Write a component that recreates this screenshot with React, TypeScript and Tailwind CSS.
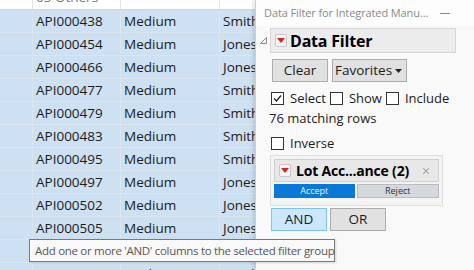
import { X } from "lucide-react";

const rows = [
  { id: "API000438", level: "Medium", who: "Smith" },
  { id: "API000454", level: "Medium", who: "Jones" },
  { id: "API000466", level: "Medium", who: "Jones" },
  { id: "API000477", level: "Medium", who: "Smith" },
  { id: "API000479", level: "Medium", who: "Smith" },
  { id: "API000483", level: "Medium", who: "Smith" },
  { id: "API000495", level: "Medium", who: "Smith" },
  { id: "API000497", level: "Medium", who: "Jones" },
  { id: "API000502", level: "Medium", who: "Jones" },
  { id: "API000505", level: "Medium", who: "Jones" },
  { id: "API000511", level: "Medium", who: "Jones" },
  { id: "API000519", level: "Medium", who: "Smith" },
];

function RedButton() {
  return (
    <span className="flex h-[13px] w-[12px] shrink-0 items-center justify-center rounded-[2px] border border-[#c8c8c8] bg-[#f4f4f4]">
      <svg width="8" height="5" viewBox="0 0 8 5">
        <path d="M0 0 H8 L4 5 Z" fill="#d9232a" />
      </svg>
    </span>
  );
}

function Check({ checked, label }: { checked?: boolean; label: string }) {
  return (
    <span className="flex items-center gap-[6px] whitespace-nowrap">
      <span className="flex h-[13px] w-[13px] items-center justify-center border border-[#333] bg-white">
        {checked && (
          <svg width="11" height="11" viewBox="0 0 11 11">
            <path d="M2 5.5 L4.5 8 L9 2.5" stroke="#222" strokeWidth="1.3" fill="none" />
          </svg>
        )}
      </span>
      <span>{label}</span>
    </span>
  );
}

export default function App() {
  return (
    <div
      className="relative flex h-[270px] w-[474px] overflow-hidden bg-white text-[#1b1b1b]"
      style={{ fontFamily: '"Open Sans", "Noto Sans", sans-serif' }}
    >
      {/* Data table */}
      <div className="flex-1 overflow-hidden whitespace-nowrap">
        <div className="-mt-[13px] grid h-[23px] grid-cols-[33px_88px_99px_1fr] border-b border-[#d4d4d4] text-[13.5px] text-[#777]">
          <div className="border-r border-[#e3e3e3]" />
          <div className="border-r border-[#e3e3e3] pl-[3px] leading-[21px]">65 Others</div>
          <div className="border-r border-[#e3e3e3]" />
          <div />
        </div>
        {rows.map((r) => (
          <div
            key={r.id}
            className="grid h-[23px] grid-cols-[33px_88px_99px_1fr] border-b border-[#dbe6f0] bg-[#cde1f2] text-[13.5px] leading-[22px]"
          >
            <div className="border-r border-[#dbe6f0]" />
            <div className="border-r border-[#dbe6f0] pl-[3px]">{r.id}</div>
            <div className="border-r border-[#dbe6f0] pl-[3px]">{r.level}</div>
            <div className="pl-[3px]">{r.who}</div>
          </div>
        ))}
      </div>

      {/* Data filter window */}
      <div className="flex w-[219px] shrink-0 flex-col whitespace-nowrap border-l border-[#cfcfcf] bg-[#f9f9f9] text-[13px] shadow-[-2px_0_4px_rgba(0,0,0,0.12)]">
        <div className="flex h-[26px] items-center justify-between bg-[#fdfdfd] pl-[8px] pr-[24px] text-[11px] tracking-[-0.1px] text-[#8a8a8a]">
          <span>Data Filter for Integrated Manu...</span>
          <span className="h-px w-[10px] bg-[#8a8a8a]" />
        </div>

        <div className="mt-[2px] flex items-center">
          <span className="flex w-[14px] justify-center">
            <svg width="7" height="7" viewBox="0 0 7 7">
              <path d="M6.5 0.5 V6.5 H0.5 Z" fill="none" stroke="#8c8c8c" strokeWidth="1" />
            </svg>
          </span>
          <div className="flex h-[25px] w-[186px] items-center gap-[3px] border border-[#d6d6d6] bg-[#ececec] pl-[4px]">
            <RedButton />
            <span className="text-[16px] font-bold leading-none tracking-[-0.2px] text-black">Data Filter</span>
          </div>
        </div>

        <div className="ml-[16px] mt-[6px] flex gap-[4px]">
          <button className="h-[23px] w-[56px] border border-[#adadad] bg-[#e1e1e1] text-[13.5px] leading-none">Clear</button>
          <button className="flex h-[23px] w-[75px] items-center justify-between border border-[#adadad] bg-[#e1e1e1] pl-[2px] pr-[4px] text-[13.5px] leading-none">
            <span>Favorites</span>
            <svg width="7" height="4" viewBox="0 0 7 4">
              <path d="M0 0 H7 L3.5 4 Z" fill="#222" />
            </svg>
          </button>
        </div>

        <div className="ml-[15px] mt-[8px] flex h-[16px] items-center gap-[4px] leading-none">
          <Check checked label="Select" />
          <Check label="Show" />
          <Check label="Include" />
        </div>

        <div className="ml-[13px] mt-[4px] h-[16px] leading-[16px]">76 matching rows</div>

        <div className="ml-[15px] mt-[9px] flex h-[16px] items-center leading-none">
          <Check label="Inverse" />
        </div>

        <div className="ml-[14px] mt-[4px] flex h-[51px] w-[173px] flex-col gap-[2px] border border-[#dedede] bg-[#f4f4f4] p-[3px]">
          <div className="flex h-[23px] items-center justify-between border border-[#cfcfcf] bg-[#e8e8e8] pl-[4px] pr-[7px]">
            <span className="flex items-center gap-[5px]">
              <RedButton />
              <span className="text-[14px] font-bold leading-none tracking-[-0.2px] text-black">Lot Acc...ance (2)</span>
            </span>
            <X className="h-[10px] w-[10px] text-[#9a9a9a]" strokeWidth={2.5} />
          </div>
          <div className="flex h-[14px] gap-[2px] text-[9px] leading-[13px]">
            <div className="flex-1 bg-[#0a78d7] text-center text-[#e8f2fc]">Accept</div>
            <div className="flex-1 border border-[#b9bcc0] bg-[#d5d9dd] text-center leading-[12px] text-[#333]">Reject</div>
          </div>
        </div>

        <div className="ml-[15px] mt-[2px] flex gap-[3px]">
          <button className="h-[23px] w-[56px] border border-[#7fc1f3] bg-[#cce8ff] text-[13.5px] leading-none">AND</button>
          <button className="h-[23px] w-[56px] border border-[#adadad] bg-[#e1e1e1] text-[13.5px] leading-none">OR</button>
        </div>
      </div>

      {/* Tooltip */}
      <div className="absolute left-[29px] top-[239px] flex h-[23px] w-[306px] items-center whitespace-nowrap border border-[#7a7a7a] bg-[#f9f9f9] pl-[5px] text-[11.5px] tracking-[-0.3px] text-[#575757] shadow-[1px_1px_2px_rgba(0,0,0,0.15)]">
        Add one or more 'AND' columns to the selected filter group
      </div>
    </div>
  );
}
